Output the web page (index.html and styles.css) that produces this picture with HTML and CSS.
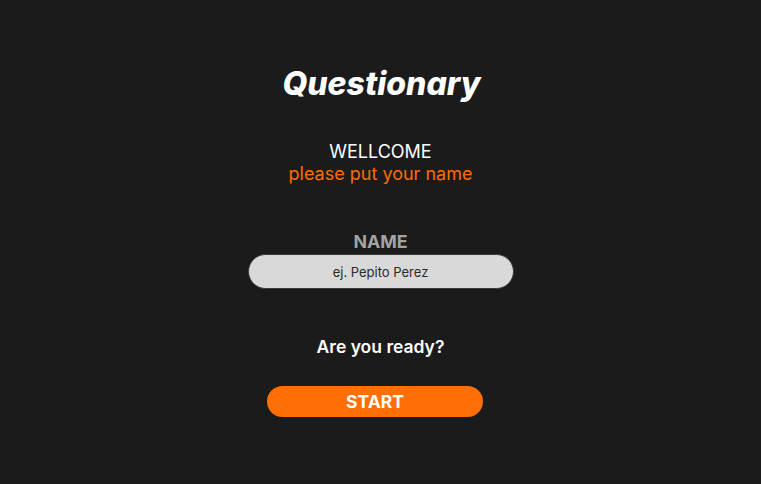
FILE: index.html
```html
<!DOCTYPE html>
<html>
<head>
<meta charset="utf-8">
<link rel="stylesheet" href="styles.css">
</head>
<body>
<main class="page">
  <h1 class="title">Questionary</h1>
  <div class="welcome">
    <p class="welcome-main">WELLCOME</p>
    <p class="welcome-sub">please put your name</p>
  </div>
  <div class="field">
    <label class="field-label" for="name">NAME</label>
    <input class="field-input" id="name" type="text" placeholder="ej. Pepito Perez">
  </div>
  <p class="ready">Are you ready?</p>
  <button class="start">START</button>
</main>
</body>
</html>
```
FILE: styles.css
```css
html, body {
  margin: 0;
  padding: 0;
  background: #1b1b1b;
  height: 100%;
}
.page {
  display: flex;
  flex-direction: column;
  align-items: center;
  font-family: "Inter", "Liberation Sans", sans-serif;
  color: #ffffff;
  padding-top: 64px;
}
.title {
  margin: 0;
  font-size: 32px;
  font-weight: 800;
  font-style: italic;
  line-height: 40px;
  letter-spacing: 0;
  padding-left: 2px;
}
.welcome {
  margin-top: 37px;
  text-align: center;
}
.welcome p {
  margin: 0;
  font-size: 18px;
  line-height: 22px;
}
.welcome-main {
  font-size: 17.6px;
}
.welcome-sub {
  color: #ff6b00;
}
.field {
  margin-top: 46px;
  display: flex;
  flex-direction: column;
  align-items: center;
  gap: 1px;
}
.field-label {
  font-size: 17.8px;
  font-weight: 700;
  color: #a3a3a3;
  line-height: 22px;
}
.field-input {
  box-sizing: border-box;
  width: 266px;
  height: 35px;
  border-radius: 17.5px;
  border: 1px solid #3a3a3a;
  background: #d9d9d9;
  text-align: center;
  font-family: "Inter", "Liberation Sans", sans-serif;
  font-size: 13px;
  color: #222;
  outline: none;
}
.field-input::placeholder {
  color: #2a2a2a;
}
.ready {
  margin: 47px 0 0;
  font-size: 17.5px;
  font-weight: 600;
  line-height: 22px;
}
.start {
  margin-top: 28px;
  margin-right: 11px;
  width: 216px;
  height: 31px;
  border: none;
  border-radius: 16px;
  background: #ff6f05;
  color: #ffffff;
  font-family: "Inter", "Liberation Sans", sans-serif;
  font-size: 17.5px;
  font-weight: 700;
  cursor: pointer;
}
```
